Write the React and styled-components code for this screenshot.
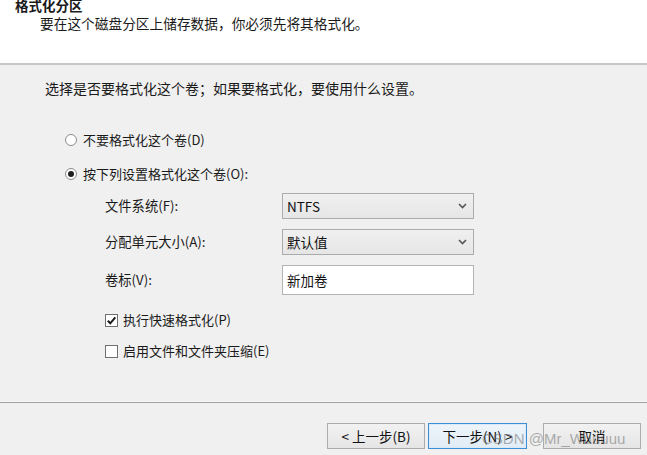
import React from "react";
import styled, { createGlobalStyle } from "styled-components";

const Global = createGlobalStyle`
  html, body { margin: 0; padding: 0; background: #f0f0f0; }
  body { width: 647px; height: 455px; overflow: hidden; }
  * { box-sizing: border-box; }
`;

const FONT = `"Noto Sans CJK SC", "Noto Sans", sans-serif`;

const Window = styled.div`
  width: 647px;
  height: 455px;
  display: flex;
  flex-direction: column;
  font-family: ${FONT};
  font-size: 13px;
  color: #1a1a1a;
  background: #f0f0f0;
  position: relative;
`;

const Header = styled.header`
  height: 65px;
  flex: none;
  background: #ffffff;
  border-bottom: 2px solid #c6c6c6;
  padding-left: 15px;
`;

const Title = styled.div`
  font-weight: 700;
  font-size: 13.5px;
  line-height: 16px;
  margin-top: -3px;
`;

const Subtitle = styled.div`
  font-size: 13.7px;
  line-height: 18px;
  margin-top: 1px;
  padding-left: 25px;
`;

const Body = styled.main`
  flex: 1;
  padding: 14px 0 0 45px;
  border-bottom: 1px solid #a0a0a0;
  box-shadow: inset 0 -7px 0 -6px #f8f8f8;
`;

const Intro = styled.div`
  font-size: 14px;
  line-height: 18px;
`;

const Options = styled.div`
  margin-top: 33px;
  padding-left: 20px;
  display: flex;
  flex-direction: column;
  gap: 14px;
`;

const OptionRow = styled.label`
  display: flex;
  align-items: center;
  gap: 6px;
  line-height: 20px;
  height: 20px;
`;

const RadioDot = styled.span`
  width: 12px;
  height: 12px;
  border-radius: 50%;
  border: 1px solid #8c8c8c;
  background: #fff;
  display: inline-flex;
  align-items: center;
  justify-content: center;
  &::after {
    content: "";
    width: 6px;
    height: 6px;
    border-radius: 50%;
    background: ${(p) => (p.$on ? "#1f1f1f" : "transparent")};
  }
`;

const Form = styled.div`
  margin-top: 9px;
  margin-left: 60px;
  display: grid;
  grid-template-columns: 177px 192px;
  grid-auto-rows: auto;
  row-gap: 10px;
  align-items: center;
`;

const FieldLabel = styled.div`
  line-height: 18px;
  font-size: 13.3px;
`;

const SelectBox = styled.div`
  height: 26px;
  border: 1px solid #acacac;
  background: linear-gradient(#f0f0f0, #e6e6e6);
  display: flex;
  align-items: center;
  justify-content: space-between;
  padding: 0 6px 0 4px;
  font-size: 13.5px;
  color: #111;
`;

const TextBox = styled.input`
  height: 30px;
  width: 192px;
  border: 1px solid #b4b4b4;
  background: #fff;
  padding: 0 4px;
  font-family: ${FONT};
  font-size: 13.5px;
  color: #111;
  outline: none;
`;

const Checks = styled.div`
  margin-top: 15px;
  margin-left: 60px;
  display: flex;
  flex-direction: column;
  gap: 11px;
`;

const CheckRow = styled.label`
  display: flex;
  align-items: center;
  gap: 5px;
  height: 20px;
  line-height: 20px;
`;

const CheckBox = styled.span`
  width: 13px;
  height: 13px;
  border: 1px solid #707070;
  background: #fff;
  display: inline-flex;
  align-items: center;
  justify-content: center;
`;

const Footer = styled.footer`
  height: 52px;
  flex: none;
  display: flex;
  justify-content: flex-end;
  align-items: flex-start;
  padding: 20px 6px 0 0;
  position: relative;
`;

const Button = styled.button`
  width: ${(p) => (p.$w ? p.$w : 98)}px;
  height: 26px;
  margin-left: ${(p) => p.$gap || 0}px;
  border: 1px solid ${(p) => (p.$primary ? "#3c8fd6" : "#acacac")};
  background: ${(p) =>
    p.$primary ? "linear-gradient(#eef5fb, #e2ecf5)" : "linear-gradient(#f2f2f2, #e5e5e5)"};
  box-shadow: ${(p) => (p.$primary ? "inset 0 0 0 1px #dbeaf6" : "none")};
  font-family: ${FONT};
  font-size: 13.5px;
  color: #111;
  padding: 0;
  display: flex;
  align-items: center;
  justify-content: center;
`;

const Watermark = styled.div`
  position: absolute;
  left: 482px;
  top: 26px;
  font-family: "Liberation Sans", Arial, sans-serif;
  font-size: 15px;
  line-height: 20px;
  color: rgba(110, 110, 110, 0.55);
  pointer-events: none;
  white-space: nowrap;
`;

const Chevron = () => (
  <svg width="9" height="6" viewBox="0 0 9 6">
    <path d="M1 1 L4.5 4.5 L8 1" fill="none" stroke="#555" strokeWidth="1.6" />
  </svg>
);

const Tick = () => (
  <svg width="11" height="11" viewBox="0 0 11 11">
    <path d="M1.8 5.8 L4.3 8.3 L9.3 2.3" fill="none" stroke="#1a1a1a" strokeWidth="2" />
  </svg>
);

export default function App() {
  return (
    <>
      <Global />
      <Window>
        <Header>
          <Title>格式化分区</Title>
          <Subtitle>要在这个磁盘分区上储存数据，你必须先将其格式化。</Subtitle>
        </Header>
        <Body>
          <Intro>选择是否要格式化这个卷；如果要格式化，要使用什么设置。</Intro>
          <Options>
            <OptionRow>
              <RadioDot />
              不要格式化这个卷(D)
            </OptionRow>
            <OptionRow>
              <RadioDot $on />
              按下列设置格式化这个卷(O):
            </OptionRow>
          </Options>
          <Form>
            <FieldLabel>文件系统(F):</FieldLabel>
            <SelectBox>
              NTFS
              <Chevron />
            </SelectBox>
            <FieldLabel>分配单元大小(A):</FieldLabel>
            <SelectBox>
              默认值
              <Chevron />
            </SelectBox>
            <FieldLabel>卷标(V):</FieldLabel>
            <TextBox defaultValue="新加卷" />
          </Form>
          <Checks>
            <CheckRow>
              <CheckBox>
                <Tick />
              </CheckBox>
              执行快速格式化(P)
            </CheckRow>
            <CheckRow>
              <CheckBox />
              启用文件和文件夹压缩(E)
            </CheckRow>
          </Checks>
        </Body>
        <Footer>
          <Button>&lt; 上一步(B)</Button>
          <Button $primary $gap={3} $w={99}>
            下一步(N) &gt;
          </Button>
          <Button $gap={16}>取消</Button>
          <Watermark>CSDN @Mr_Wuuuuu</Watermark>
        </Footer>
      </Window>
    </>
  );
}
